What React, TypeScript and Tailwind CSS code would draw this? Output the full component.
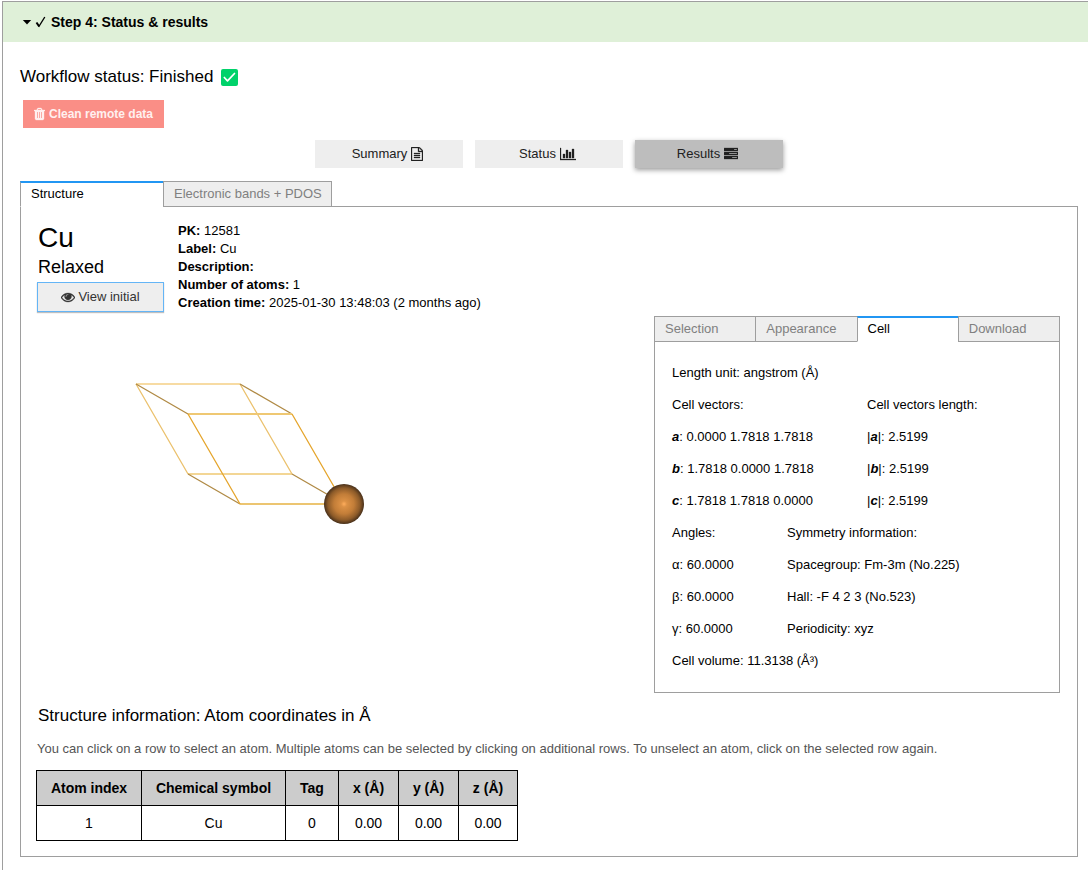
import type { ReactNode } from "react";

const icons = {
  trash: {
    box: "192 0 1408 1792",
    size: "w-[11px] h-[14px]",
    d: "M704 1376v-704q0-14-9-23t-23-9h-64q-14 0-23 9t-9 23v704q0 14 9 23t23 9h64q14 0 23-9t9-23zm256 0v-704q0-14-9-23t-23-9h-64q-14 0-23 9t-9 23v704q0 14 9 23t23 9h64q14 0 23-9t9-23zm256 0v-704q0-14-9-23t-23-9h-64q-14 0-23 9t-9 23v704q0 14 9 23t23 9h64q14 0 23-9t9-23zm-544-992h448l-48-117q-7-9-17-11h-317q-10 2-17 11zm928 32v64q0 14-9 23t-23 9h-96v948q0 83-47 143.5t-113 60.5h-832q-66 0-113-58.5t-47-141.5v-952h-96q-14 0-23-9t-9-23v-64q0-14 9-23t23-9h309l70-167q15-37 54-63t79-26h320q40 0 79 26t54 63l70 167h309q14 0 23 9t9 23z",
  },
  file: {
    box: "128 0 1536 1792",
    size: "w-[12px] h-[14px]",
    d: "M1596 380q28 28 48 76t20 88v1152q0 40-28 68t-68 28h-1344q-40 0-68-28t-28-68v-1600q0-40 28-68t68-28h896q40 0 88 20t76 48zm-444-244v376h376q-10-29-22-41l-313-313q-12-12-41-22zm384 1528v-1024h-416q-40 0-68-28t-28-68v-416h-768v1536h1280zm-1024-864q0-14 9-23t23-9h704q14 0 23 9t9 23v64q0 14-9 23t-23 9h-704q-14 0-23-9t-9-23v-64zm736 224q14 0 23 9t9 23v64q0 14-9 23t-23 9h-704q-14 0-23-9t-9-23v-64q0-14 9-23t23-9h704zm0 256q14 0 23 9t9 23v64q0 14-9 23t-23 9h-704q-14 0-23-9t-9-23v-64q0-14 9-23t23-9h704z",
  },
  chart: {
    box: "0 0 2048 1792",
    size: "w-[16px] h-[14px]",
    d: "M640 896v512h-256v-512h256zm384-512v1024h-256v-1024h256zm1024 1152v128h-2048v-1536h128v1408h1920zm-640-896v768h-256v-768h256zm384-384v1152h-256v-1152h256z",
  },
  tasks: {
    box: "0 0 1792 1792",
    size: "w-[14px] h-[14px]",
    d: "M1024 1408h640v-128h-640v128zm-384-512h1024v-128h-1024v128zm640-512h384v-128h-384v128zm512 832v256q0 26-19 45t-45 19h-1664q-26 0-45-19t-19-45v-256q0-26 19-45t45-19h1664q26 0 45 19t19 45zm0-512v256q0 26-19 45t-45 19h-1664q-26 0-45-19t-19-45v-256q0-26 19-45t45-19h1664q26 0 45 19t19 45zm0-512v256q0 26-19 45t-45 19h-1664q-26 0-45-19t-19-45v-256q0-26 19-45t45-19h1664q26 0 45 19t19 45z",
  },
  eye: {
    box: "0 0 1792 1792",
    size: "w-[14px] h-[14px]",
    d: "M1664 960q-152-236-381-353 61 104 61 225 0 185-131.5 316.5t-316.5 131.5-316.5-131.5-131.5-316.5q0-121 61-225-229 117-381 353 133 205 333.5 326.5t434.5 121.5 434.5-121.5 333.5-326.5zm-720-384q0-20-14-34t-34-14q-125 0-214.5 89.5t-89.5 214.5q0 20 14 34t34 14 34-14 14-34q0-86 61-147t147-61q20 0 34-14t14-34zm848 384q0 34-20 69-140 230-376.5 368.5t-499.5 138.5-499.5-139-376.5-368q-20-35-20-69t20-69q140-229 376.5-368t499.5-139 499.5 139 376.5 368q20 35 20 69z",
  },
};

function Icon({ name }: { name: keyof typeof icons }) {
  const icon = icons[name];
  return (
    <svg
      viewBox={icon.box}
      className={`${icon.size} shrink-0`}
      fill="currentColor"
      stroke="currentColor"
      strokeWidth="40"
      aria-hidden="true"
    >
      <path d={icon.d} />
    </svg>
  );
}

function Tab({ active, className, children }: { active?: boolean; className: string; children: ReactNode }) {
  const look = active
    ? "border-t-2 border-t-[#2196f3] border-b-white bg-white pb-[2px] text-black"
    : "border-t-[#9e9e9e] border-b-[#9e9e9e] bg-[#eeeeee] text-[#808080]";
  return (
    <button
      type="button"
      role="tab"
      aria-selected={active ? true : false}
      className={`-mr-px flex h-[26px] items-center border border-x-[#9e9e9e] pr-2 pl-[10px] text-left whitespace-nowrap ${look} ${className}`}
    >
      {children}
    </button>
  );
}

function ViewButton({ active, icon, children }: { active?: boolean; icon: keyof typeof icons; children: ReactNode }) {
  const look = active
    ? "bg-[#bdbdbd] shadow-[0_2px_5px_rgba(0,0,0,0.4)]"
    : "bg-[#eeeeee]";
  return (
    <button
      type="button"
      className={`flex h-7 w-[148px] items-center justify-center gap-1 pr-[3px] text-[#212121] ${look}`}
    >
      {children}
      <Icon name={icon} />
    </button>
  );
}

function CrystalView() {
  return (
    <svg viewBox="0 0 240 150" className="h-[150px] w-[240px]" fill="none" role="img" aria-label="Unit cell of Cu">
      <defs>
        <radialGradient id="atom">
          <stop offset="0" stopColor="#ffad5c" />
          <stop offset="0.15" stopColor="#dc9145" />
          <stop offset="0.5" stopColor="#c27d38" />
          <stop offset="0.8" stopColor="#8d5b29" />
          <stop offset="1" stopColor="#48301a" />
        </radialGradient>
      </defs>
      <g strokeWidth="1.3">
        <path d="M11 9H115" stroke="#f7dba3" strokeWidth="2" />
        <path d="M63 99H167" stroke="#f3d695" strokeWidth="2" />
        <path d="M11 9L63 99M115 9L167 99" stroke="#ebc16d" />
        <path d="M11 9L63 39M115 9L167 39" stroke="#b08a45" />
        <path d="M63 99L115 129M167 99L219 129" stroke="#b08a45" />
        <path d="M63 39H167" stroke="#efc873" strokeWidth="2" />
        <path d="M115 129H219" stroke="#ecc571" strokeWidth="2" />
        <path d="M63 39L115 129M167 39L219 129" stroke="#e5a52c" />
      </g>
      <circle cx="219" cy="129" r="20" fill="url(#atom)" />
    </svg>
  );
}

const vectors = [
  { name: "a", value: "0.0000 1.7818 1.7818" },
  { name: "b", value: "1.7818 0.0000 1.7818" },
  { name: "c", value: "1.7818 1.7818 0.0000" },
];

const columns = [
  { title: "Atom index", value: "1", width: "w-[105px]" },
  { title: "Chemical symbol", value: "Cu", width: "w-[144px]" },
  { title: "Tag", value: "0", width: "w-[53px]" },
  { title: "x (Å)", value: "0.00", width: "w-[60px]" },
  { title: "y (Å)", value: "0.00", width: "w-[60px]" },
  { title: "z (Å)", value: "0.00", width: "w-[59px]" },
];

function CellPanel() {
  return (
    <section className="w-[406px]">
      <div role="tablist" className="flex pr-px">
        <Tab className="flex-1">Selection</Tab>
        <Tab className="flex-1">Appearance</Tab>
        <Tab className="flex-1" active>Cell</Tab>
        <Tab className="flex-1">Download</Tab>
      </div>
      <div className="-mt-px border border-[#9e9e9e] px-[17px] py-[15px] leading-8">
        <p>Length unit: angstrom (Å)</p>
        <div className="flex">
          <div className="w-[195px]">
            <p>Cell vectors:</p>
            {vectors.map((v) => (
              <p key={v.name}>
                <em className="font-bold">{v.name}</em>: {v.value}
              </p>
            ))}
          </div>
          <div>
            <p>Cell vectors length:</p>
            {vectors.map((v) => (
              <p key={v.name}>
                |<em className="font-bold">{v.name}</em>|: 2.5199
              </p>
            ))}
          </div>
        </div>
        <div className="flex">
          <div className="w-[115px]">
            <p>Angles:</p>
            <p>α: 60.0000</p>
            <p>β: 60.0000</p>
            <p>γ: 60.0000</p>
          </div>
          <div>
            <p>Symmetry information:</p>
            <p>Spacegroup: Fm-3m (No.225)</p>
            <p>Hall: -F 4 2 3 (No.523)</p>
            <p>Periodicity: xyz</p>
          </div>
        </div>
        <p>Cell volume: 11.3138 (Å³)</p>
      </div>
    </section>
  );
}

export default function App() {
  return (
    <div className="flex min-h-screen flex-col bg-white pt-px pl-[2px] font-['Liberation_Sans',Arial,sans-serif] text-[13px] text-black">
      <main className="flex-1 border-t border-l border-[#9e9e9e]">
        <button
          type="button"
          aria-expanded="true"
          className="flex h-10 w-full items-center bg-[#dff0d8] pl-[19px] text-left text-[14px] font-bold"
        >
          <svg viewBox="0 0 10 6" className="h-[6px] w-[10px]" aria-hidden="true">
            <path d="M0.800 1h8.400L5 5.400z" />
          </svg>
          <svg viewBox="0 0 12 12" className="ml-[3px] h-3 w-3" fill="none" stroke="currentColor" aria-hidden="true">
            <path d="M1.500 6.500L4 10.300" strokeWidth="2" />
            <path d="M3.600 11L9.800 1" strokeWidth="1.400" />
          </svg>
          <span className="ml-1">Step 4: Status &amp; results</span>
        </button>

        <div className="pt-[25px] pr-[10px] pb-3 pl-[17px]">
          <h1 className="flex h-5 items-center gap-2 text-[17px]">
            Workflow status: Finished
            <svg viewBox="0 0 17 17" className="h-[17px] w-[17px]" role="img" aria-label="Done">
              <rect width="17" height="17" rx="2" fill="#00d26a" />
              <path d="M3.300 8.500L6.500 11.800L13.500 4.500" fill="none" stroke="#fff" strokeWidth="1.700" strokeLinecap="round" strokeLinejoin="round" />
            </svg>
          </h1>

          <button
            type="button"
            className="mt-[13px] ml-[3px] flex h-7 w-[141px] items-center justify-center gap-1 bg-[#fa8e86] text-[12px] font-bold text-[#fff0ef]"
          >
            <Icon name="trash" />
            Clean remote data
          </button>

          <div className="mt-3 flex justify-center gap-3">
            <ViewButton icon="file">Summary</ViewButton>
            <ViewButton icon="chart">Status</ViewButton>
            <ViewButton icon="tasks" active>Results</ViewButton>
          </div>

          <div role="tablist" className="mt-[13px] flex">
            <Tab className="w-[144px]" active>Structure</Tab>
            <Tab className="w-[169px]">Electronic bands + PDOS</Tab>
          </div>

          <div className="-mt-px border border-[#9e9e9e] pt-[15px] pr-[17px] pb-[15px] pl-4">
            <div className="flex gap-[14px]">
              <div className="w-[127px]">
                <h2 className="pl-px text-[28px] leading-8">Cu</h2>
                <p className="mt-[3px] pl-px text-[18px] leading-5">Relaxed</p>
                <button
                  type="button"
                  className="mt-[5px] flex h-[30px] w-full items-center justify-center gap-[3px] border border-[#64b5f6] bg-[#eeeeee] text-[#333333] shadow-[0_1px_1px_rgba(0,0,0,0.25)]"
                >
                  <Icon name="eye" />
                  View initial
                </button>
              </div>
              <div className="leading-[18px]">
                <p><b>PK:</b> 12581</p>
                <p><b>Label:</b> Cu</p>
                <p><b>Description:</b></p>
                <p><b>Number of atoms:</b> 1</p>
                <p><b>Creation time:</b> 2025-01-30 13:48:03 (2 months ago)</p>
              </div>
            </div>

            <div className="mt-1 flex justify-between">
              <div className="pt-[59px] pl-[88px]">
                <CrystalView />
              </div>
              <CellPanel />
            </div>

            <h3 className="mt-[13px] pl-px text-[17px] leading-5">Structure information: Atom coordinates in Å</h3>
            <p className="mt-[14px] leading-[18px] text-[#555555]">
              You can click on a row to select an atom. Multiple atoms can be selected by clicking on additional rows. To unselect an atom, click on the selected row again.
            </p>
            <table className="mt-3 -ml-px table-fixed border-collapse text-center text-[14px]">
              <thead>
                <tr className="h-[35px] bg-[#cccccc]">
                  {columns.map((c) => (
                    <th key={c.title} className={`border border-black ${c.width}`}>{c.title}</th>
                  ))}
                </tr>
              </thead>
              <tbody>
                <tr className="h-[35px]">
                  {columns.map((c) => (
                    <td key={c.title} className="border border-black">{c.value}</td>
                  ))}
                </tr>
              </tbody>
            </table>
          </div>
        </div>
      </main>
    </div>
  );
}
